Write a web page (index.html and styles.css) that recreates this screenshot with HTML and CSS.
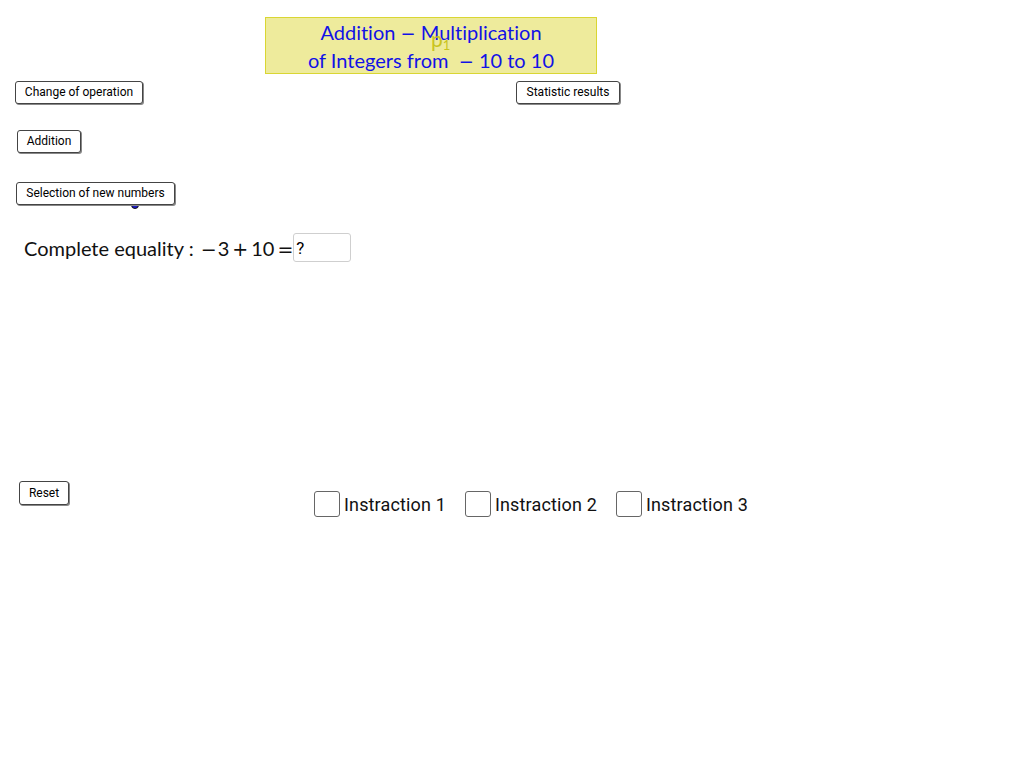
FILE: index.html
```html
<!DOCTYPE html>
<html>
<head>
<meta charset="utf-8">
<link rel="stylesheet" href="styles.css">
</head>
<body>
<div class="canvas">
  <div class="title">
    <div class="title-line">Addition <span class="op">−</span> Multiplication</div>
    <div class="title-line">of Integers from &nbsp;<span class="op">−</span> 10 to 10</div>
  </div>
  <div class="plabel">p<sub>1</sub></div>

  <button class="btn btn-change">Change of operation</button>
  <button class="btn btn-stat">Statistic results</button>
  <button class="btn btn-add">Addition</button>
  <div class="dot"></div>
  <button class="btn btn-select">Selection of new numbers</button>

  <div class="equality">
    <span class="eq-text">Complete equality : <span class="mop mop-neg">−</span>3<span class="mop">+</span>10<span class="mop mop-eq">=</span></span>
    <div class="answer">?</div>
  </div>

  <button class="btn btn-reset">Reset</button>

  <div class="checks">
    <label class="check"><span class="box"></span><span class="lbl">Instraction 1</span></label>
    <label class="check"><span class="box"></span><span class="lbl">Instraction 2</span></label>
    <label class="check"><span class="box"></span><span class="lbl">Instraction 3</span></label>
  </div>
</div>
</body>
</html>
```
FILE: styles.css
```css
html, body {
  margin: 0;
  padding: 0;
  background: #ffffff;
}
.canvas {
  position: relative;
  width: 1010px;
  height: 766px;
  overflow: hidden;
  font-family: Roboto, "Liberation Sans", sans-serif;
}
.title {
  position: absolute;
  left: 265px;
  top: 17px;
  width: 330px;
  height: 55px;
  background: #eeeb9c;
  border: 1px solid #d9d633;
  color: #1212e6;
  font-family: Lato, "DejaVu Sans", sans-serif;
  font-variant-ligatures: none;
  font-size: 20px;
  text-align: center;
  display: flex;
  flex-direction: column;
  justify-content: center;
}
.title-line {
  height: 28px;
  line-height: 28px;
}
.title .op {
  font-family: "DejaVu Sans", sans-serif;
  font-size: 18px;
  line-height: 1;
}
.plabel {
  position: absolute;
  left: 431px;
  top: 29px;
  color: #c9c41f;
  font-family: Lato, "DejaVu Sans", sans-serif;
  font-size: 21px;
  line-height: 20px;
}
.plabel sub {
  font-size: 13px;
  vertical-align: -3px;
}
.btn {
  position: absolute;
  margin: 0;
  padding: 0;
  height: 23px;
  background: #ffffff;
  border: 1px solid #444444;
  border-radius: 3px;
  box-shadow: 1px 1px 0 #888;
  font-family: Roboto, "Liberation Sans", sans-serif;
  font-size: 12px;
  color: #000;
  line-height: 21px;
  white-space: nowrap;
  text-align: center;
}
.btn-change { left: 15px; top: 81px; width: 128px; }
.btn-stat { left: 516px; top: 81px; width: 104px; }
.btn-add { left: 17px; top: 130px; width: 64px; }
.btn-select { left: 16px; top: 182px; width: 159px; }
.btn-reset { left: 19px; top: 481px; width: 50px; height: 24px; }
.dot {
  position: absolute;
  left: 131px;
  top: 201px;
  width: 8px;
  height: 8px;
  border-radius: 50%;
  background: #1a1acc;
  border: 1px solid #111;
  box-sizing: border-box;
}
.equality {
  position: absolute;
  left: 24px;
  top: 233px;
  display: flex;
  align-items: center;
}
.eq-text {
  font-family: Lato, "DejaVu Sans", sans-serif;
  font-variant-ligatures: none;
  font-size: 20px;
  color: #111;
}
.mop {
  font-family: "DejaVu Sans", sans-serif;
  font-size: 19px;
  margin: 0 3px;
  line-height: 1;
}
.mop-neg {
  margin: 0 1px 0 2px;
}
.mop-eq {
  margin-right: 0;
}
.answer {
  margin-left: 0;
  width: 58px;
  height: 29px;
  border: 1px solid #cfcfcf;
  border-radius: 3px;
  box-sizing: border-box;
  font-family: Roboto, "Liberation Sans", sans-serif;
  font-size: 17px;
  line-height: 29px;
  padding-left: 2px;
  color: #000;
}
.checks {
  position: absolute;
  left: 314px;
  top: 491px;
  display: flex;
  gap: 19px;
}
.check {
  display: flex;
  align-items: center;
  gap: 4px;
}
.box {
  width: 26px;
  height: 26px;
  box-sizing: border-box;
  border: 1px solid #666;
  border-radius: 3px;
  background: #fff;
}
.lbl {
  font-family: Roboto, "Liberation Sans", sans-serif;
  font-size: 18px;
  letter-spacing: 0.15px;
  color: #111;
}
```
